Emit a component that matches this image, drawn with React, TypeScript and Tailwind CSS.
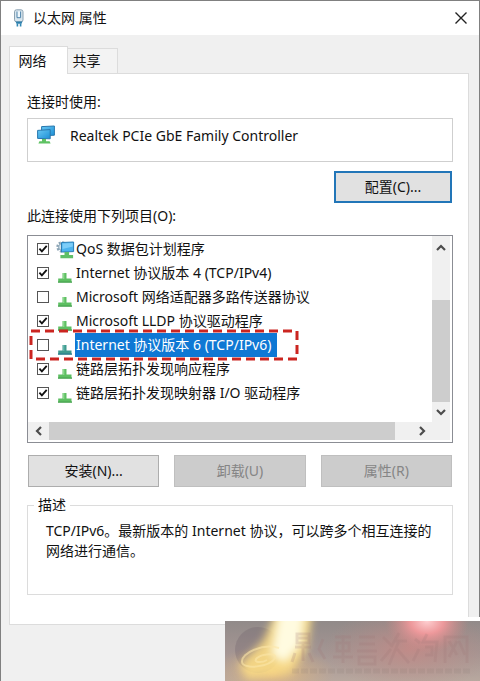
import { useState } from "react";

type Item = { id: string; label: string; checked: boolean; selected?: boolean; kind: "service" | "protocol" };

const initialItems: Item[] = [
  { id: "qos", label: "QoS 数据包计划程序", checked: true, kind: "service" },
  { id: "ipv4", label: "Internet 协议版本 4 (TCP/IPv4)", checked: true, kind: "protocol" },
  { id: "mux", label: "Microsoft 网络适配器多路传送器协议", checked: false, kind: "protocol" },
  { id: "lldp", label: "Microsoft LLDP 协议驱动程序", checked: true, kind: "protocol" },
  { id: "ipv6", label: "Internet 协议版本 6 (TCP/IPv6)", checked: false, selected: true, kind: "protocol" },
  { id: "responder", label: "链路层拓扑发现响应程序", checked: true, kind: "protocol" },
  { id: "mapper", label: "链路层拓扑发现映射器 I/O 驱动程序", checked: true, kind: "protocol" },
];

function CableIcon() {
  return (
    <svg width="12" height="18" viewBox="0 0 12 18" aria-hidden="true">
      <rect x="1.5" y="0.8" width="8.5" height="12" rx="2" fill="#d9e6ee" stroke="#8ba2b2" />
      <path d="M4 2.5v6.2h3.6V2.5" fill="#eef7fc" stroke="#4d83aa" />
      <path d="M2.5 12.5h7l-1 2.3h-5z" fill="#2c7fac" />
      <path d="M4.4 14.5v3M7.6 14.5v3" stroke="#3187b4" strokeWidth="1.6" />
    </svg>
  );
}

function AdapterIcon() {
  return (
    <svg width="20" height="20" viewBox="0 0 20 20" aria-hidden="true">
      <defs>
        <linearGradient id="screen" x1="0" y1="0" x2="1" y2="1">
          <stop offset="0" stopColor="#69c8f4" />
          <stop offset="1" stopColor="#1c8fd6" />
        </linearGradient>
      </defs>
      <path d="M5.6 1.6 18.4 1v9.2l-12.8.6z" fill="url(#screen)" stroke="#2878ae" />
      <path d="M1.6 5.4 14.2 4.6v9.2l-12.6-.4z" fill="url(#screen)" stroke="#2878ae" />
      <path d="M6 14h4v2.2h3.6l1 2.3H2.4l1-2.3H6z" fill="#5fc263" />
    </svg>
  );
}

function ServiceIcon() {
  return (
    <svg width="19" height="20" viewBox="0 0 19 20" aria-hidden="true">
      <circle cx="6" cy="7" r="4.4" fill="none" stroke="#8aa3b4" strokeWidth="2.6" strokeDasharray="2 1.4" />
      <circle cx="6" cy="7" r="3.4" fill="#d3e1e9" stroke="#8ba6b8" />
      <path d="M5.5 2.5 17.6 2v9.6l-12.1.4z" fill="#4bb3ee" stroke="#2a7fb8" />
      <path d="M6.5 3.5 16.8 3v3.4L6.5 9z" fill="#7dcdf8" />
      <path d="M8.5 12h4.6v3h4v3.2H4.4V15h4.1z" fill="#5fbf68" />
    </svg>
  );
}

function ProtocolIcon({ selected }: { selected?: boolean }) {
  return (
    <svg width="16" height="12" viewBox="0 0 16 12" aria-hidden="true">
      <path d="M5.5 1h4v5.5h5v3.5H1.2V6.5h4.3z" fill={selected ? "#3f9a8f" : "#5dbf62"} />
      <path d="M1 9.4h14v1.4H1z" fill={selected ? "#2b7d8d" : "#4aa552"} />
      <path d="M6 1h1.4v6H6z" fill={selected ? "#64b7ac" : "#8bd88c"} />
    </svg>
  );
}

function Chevron({ direction }: { direction: "up" | "down" | "left" | "right" }) {
  const paths = {
    up: "M2 8 6 4l4 4",
    down: "M2 4l4 4 4-4",
    left: "M8 2 4 6l4 4",
    right: "M4 2l4 4-4 4",
  };
  return (
    <svg width="12" height="12" viewBox="0 0 12 12" aria-hidden="true">
      <path d={paths[direction]} fill="none" stroke="#4c4c4c" strokeWidth="2.2" />
    </svg>
  );
}

function ItemRow({ item, onToggle }: { item: Item; onToggle: () => void }) {
  return (
    <li className="relative h-6">
      <label className="flex h-6 items-center whitespace-nowrap">
        <span className="relative mr-1.5 block h-3 w-3 shrink-0">
          <input
            type="checkbox"
            checked={item.checked}
            onChange={onToggle}
            className="peer absolute inset-0 h-3 w-3 appearance-none border border-[#555] bg-white"
          />
          <svg
            className="pointer-events-none absolute inset-0 hidden h-3 w-3 peer-checked:block"
            viewBox="0 0 12 12"
            aria-hidden="true"
          >
            <path d="M2.4 5.6 4.9 8.4 9.7 2.8" fill="none" stroke="#111" strokeWidth="1.8" />
          </svg>
        </span>
        <span className="flex h-6 w-5 shrink-0 items-end justify-center pb-px">
          {item.kind === "service" ? <ServiceIcon /> : <ProtocolIcon selected={item.selected} />}
        </span>
        <span className={item.selected ? "bg-[#0f78d4] pr-1.5 pl-px leading-6 text-white" : "pl-px leading-6"}>
          {item.label}
        </span>
      </label>
      {item.selected && (
        <svg className="pointer-events-none absolute -top-1 -left-2 h-8 w-[270px]" aria-hidden="true">
          <rect x="2" y="2" width="266" height="28" fill="none" stroke="#cb2520" strokeWidth="3" strokeDasharray="9 5" />
        </svg>
      )}
    </li>
  );
}

function PhotoBanner() {
  return (
    <div className="absolute -right-px bottom-0 w-[255px] border-t-4 border-white">
      <svg className="block w-full" viewBox="0 0 255 60" aria-hidden="true">
        <defs>
          <linearGradient id="base" x1="0" y1="0" x2="0" y2="1">
            <stop offset="0" stopColor="#918a89" />
            <stop offset="0.55" stopColor="#a59693" />
            <stop offset="1" stopColor="#b8a89f" />
          </linearGradient>
          <radialGradient id="pink">
            <stop offset="0" stopColor="#ffd0d2" />
            <stop offset="0.4" stopColor="#f59a9d" stopOpacity="0.9" />
            <stop offset="1" stopColor="#cc8584" stopOpacity="0" />
          </radialGradient>
          <radialGradient id="rose">
            <stop offset="0" stopColor="#cc8885" stopOpacity="0.75" />
            <stop offset="1" stopColor="#b88984" stopOpacity="0" />
          </radialGradient>
          <radialGradient id="glow">
            <stop offset="0" stopColor="#e6c084" />
            <stop offset="1" stopColor="#d0ab80" stopOpacity="0" />
          </radialGradient>
          <filter id="soft" x="-30%" y="-30%" width="160%" height="160%">
            <feGaussianBlur stdDeviation="4" />
          </filter>
        </defs>
        <rect width="255" height="60" fill="url(#base)" />
        <ellipse cx="185" cy="28" rx="85" ry="42" fill="url(#rose)" />
        <ellipse cx="202" cy="0" rx="42" ry="32" fill="url(#pink)" />
        <ellipse cx="48" cy="52" rx="62" ry="28" fill="url(#glow)" />
        <circle cx="33" cy="29" r="23" fill="#6d606a" opacity="0.3" />
        <path d="M52-10h36L82 28 66 52 22 58 14 44 38 20z" fill="#fbdc85" opacity="0.9" filter="url(#soft)" />
        <path d="M54-10h26L76 24 60 42 46 34z" fill="#fffbe0" filter="url(#soft)" />
        <path
          d="M54 27C38 22 16 32 17 41c1 8 28 5 33-4 2-6-13-4-18 0-5 5 5 5 10 2"
          fill="none"
          stroke="#fbe6a8"
          strokeWidth="2"
          opacity="0.6"
        />
        <g fill="none" stroke="#a07878" strokeWidth="3" opacity="0.22">
          <path d="M72 13h12v9H72zM72 17h12M70 26h16M78 22v18M70 32l-3 9M84 32l4 9" />
          <path d="M98 18l-4 10 6 10M110 16h16M112 22h12v8h-12zM118 14v28M108 36h20" />
          <path d="M134 16h16M134 23h16M132 30h20M134 36h16v7h-16z" />
          <path d="M158 16l8 8M156 40l10-12M174 12l-8 14M170 20h12M174 20l-10 24M172 28l12 14" />
          <path d="M190 18l5 4M188 40l6-12M202 13l-4 8h14l-2 20M200 26h7v8h-7" />
          <path d="M220 42V16h22v26M224 20l8 14M232 20l-8 16M234 20l6 14" />
        </g>
        <path d="M67 50h178" stroke="#807069" strokeWidth="5" strokeDasharray="7 2" opacity="0.12" />
      </svg>
    </div>
  );
}

const pushButton = "h-8 border text-center leading-7";

export default function App() {
  const [items, setItems] = useState(initialItems);
  const toggle = (id: string) =>
    setItems((list) => list.map((i) => (i.id === id ? { ...i, checked: !i.checked } : i)));

  return (
    <main className="relative border-x border-t border-[#808080] bg-[#f0f0f0] pb-[56px] font-['Noto_Sans','Noto_Sans_CJK_SC',sans-serif] text-sm text-[#111]">
      <header className="flex h-[34px] items-center bg-white pr-3 pl-3">
        <CableIcon />
        <h1 className="ml-2 grow">以太网 属性</h1>
        <button type="button" aria-label="关闭">
          <svg width="12" height="12" viewBox="0 0 12 12" aria-hidden="true">
            <path d="M.5.5l11 11M11.5.5l-11 11" stroke="#222" strokeWidth="1.4" />
          </svg>
        </button>
      </header>

      <div className="pt-[11px] pr-2.5 pl-2">
        <div role="tablist" className="flex items-end">
          <button
            type="button"
            role="tab"
            aria-selected="true"
            className="relative z-10 -mb-px h-7 w-[59px] border border-b-0 border-[#dcdcdc] bg-white pr-3 leading-6"
          >
            网络
          </button>
          <button
            type="button"
            role="tab"
            aria-selected="false"
            className="h-[25px] w-[50px] border border-b-0 border-l-0 border-[#dcdcdc] bg-[#f3f3f3] pr-3 leading-6"
          >
            共享
          </button>
        </div>

        <section role="tabpanel" className="border border-[#dcdcdc] bg-white pt-[18px] pr-[15px] pb-[29px] pl-[17px]">
          <p className="leading-5">连接时使用:</p>
          <div className="mt-1.5 flex h-11 border border-[#cfcfcf] pt-1.5 pl-2">
            <AdapterIcon />
            <span className="ml-3.5 leading-[22px]">Realtek PCIe GbE Family Controller</span>
          </div>
          <div className="mt-[9px] flex justify-end">
            <button type="button" className="mr-px h-8 w-[118px] border-2 border-[#2276b8] bg-[#e1e1e1] leading-7">
              配置(C)...
            </button>
          </div>

          <p className="mt-[3px] leading-5" id="items-label">
            此连接使用下列项目(O):
          </p>
          <div className="mt-[9px] border border-[#8b8d94] pr-0.5 pb-0.5">
            <div className="flex">
              <ul aria-labelledby="items-label" className="h-[186px] min-w-0 grow pt-px pl-[9px]">
                {items.map((item) => (
                  <ItemRow key={item.id} item={item} onToggle={() => toggle(item.id)} />
                ))}
              </ul>
              <div className="flex w-[18px] flex-col bg-[#f0f0f0]">
                <button type="button" aria-label="向上滚动" className="flex h-6 items-center justify-center">
                  <Chevron direction="up" />
                </button>
                <div className="mt-10 grow bg-[#cdcdcd]" />
                <button type="button" aria-label="向下滚动" className="flex h-5 items-center justify-center">
                  <Chevron direction="down" />
                </button>
              </div>
            </div>
            <div className="flex h-[18px] bg-[#f0f0f0]">
              <button type="button" aria-label="向左滚动" className="flex w-[21px] items-center justify-center">
                <Chevron direction="left" />
              </button>
              <div className="grow bg-[#cdcdcd]" />
              <button type="button" aria-label="向右滚动" className="mr-[18px] ml-4 flex w-[21px] items-center justify-center">
                <Chevron direction="right" />
              </button>
            </div>
          </div>

          <div className="mt-3 grid grid-cols-3 gap-[15px] px-px">
            <button type="button" className={`${pushButton} border-[#adadad] bg-[#e1e1e1]`}>
              安装(N)...
            </button>
            <button type="button" disabled className={`${pushButton} border-[#bfbfbf] bg-[#cccccc] text-[#858585]`}>
              卸载(U)
            </button>
            <button type="button" disabled className={`${pushButton} border-[#bfbfbf] bg-[#cccccc] text-[#858585]`}>
              属性(R)
            </button>
          </div>

          <fieldset className="mt-2 h-[100px] border border-[#dcdcdc] px-[18px] pt-1.5">
            <legend className="-ml-3 px-1 leading-5">描述</legend>
            <p className="leading-5">TCP/IPv6。最新版本的 Internet 协议，可以跨多个相互连接的网络进行通信。</p>
          </fieldset>
        </section>
      </div>

      <PhotoBanner />
    </main>
  );
}
